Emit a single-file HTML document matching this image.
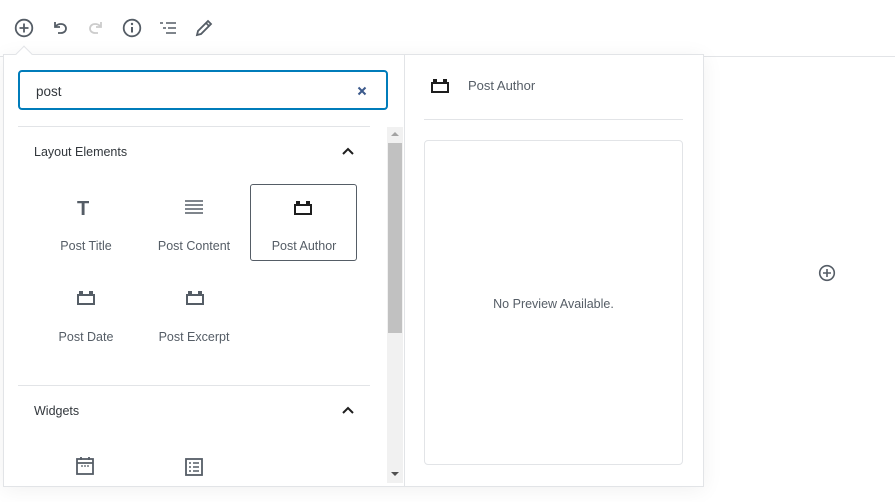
<!DOCTYPE html>
<html><head><meta charset="utf-8"><style>
*{box-sizing:border-box;margin:0;padding:0}
body{width:895px;height:502px;overflow:hidden;background:#fff;font-family:"Liberation Sans",sans-serif;color:#555d66;position:relative}
.abs{position:absolute}
.t{font-size:12.5px;color:#555d66}
svg{display:block}
</style></head><body>
<div class="abs" style="left:0;top:56px;width:895px;height:1px;background:#e2e4e7"></div>
<svg class="abs" style="left:13px;top:17px" width="22" height="22" viewBox="0 0 22 22"><circle cx="11" cy="11" r="8.3" fill="none" stroke="#555d66" stroke-width="1.8"/><path d="M11 6.5v9M6.5 11h9" stroke="#555d66" stroke-width="1.8"/></svg>
<svg class="abs" style="left:50px;top:18px" width="20" height="20" viewBox="0 0 20 20"><path d="M5 4v5h5" fill="none" stroke="#555d66" stroke-width="1.8"/><path d="M5.5 8.5C7 6.5 9 6 11 6c3 0 5 2 5 4.5S14 15 11 15H8" fill="none" stroke="#555d66" stroke-width="1.8"/></svg>
<svg class="abs" style="left:86px;top:18px;transform:scaleX(-1)" width="20" height="20" viewBox="0 0 20 20"><path d="M5 4v5h5" fill="none" stroke="#ccc" stroke-width="1.8"/><path d="M5.5 8.5C7 6.5 9 6 11 6c3 0 5 2 5 4.5S14 15 11 15H8" fill="none" stroke="#ccc" stroke-width="1.8"/></svg>
<svg class="abs" style="left:121px;top:17px" width="22" height="22" viewBox="0 0 22 22"><circle cx="11" cy="11" r="8.3" fill="none" stroke="#555d66" stroke-width="1.8"/><path d="M11 10v5.5" stroke="#555d66" stroke-width="2"/><circle cx="11" cy="7" r="1.2" fill="#555d66"/></svg>
<svg class="abs" style="left:158px;top:18px" width="20" height="20" viewBox="0 0 20 20"><path d="M2 5h3M8 5h10M5 10h3M10 10h8M8 15h10" stroke="#555d66" stroke-width="1.6"/></svg>
<svg class="abs" style="left:193px;top:17px" width="22" height="22" viewBox="0 0 22 22"><path d="M4 18l1-4L15 4l3 3L8 17z" fill="none" stroke="#555d66" stroke-width="1.8"/><path d="M13 6l3 3" stroke="#555d66" stroke-width="1.6"/></svg>
<div class="abs" style="left:3px;top:54px;width:701px;height:433px;border:1px solid #e2e4e7;background:#fff;box-shadow:0 3px 20px rgba(0,0,0,.06)"></div>
<div class="abs" style="left:18px;top:48px;width:12px;height:12px;background:#fff;border-left:1px solid #e2e4e7;border-top:1px solid #e2e4e7;transform:rotate(45deg)"></div>
<div class="abs" style="left:404px;top:55px;width:1px;height:431px;background:#e2e4e7"></div>
<div class="abs" style="left:18px;top:70px;width:370px;height:40px;border:2px solid #007cba;border-radius:4px"></div>
<div class="abs" style="left:36px;top:84px;font-size:13.5px;color:#32373c">post</div>
<svg class="abs" style="left:356px;top:85px" width="12" height="12" viewBox="0 0 12 12"><path d="M2.5 2.5l7 7M9.5 2.5l-7 7" stroke="#3c5a8c" stroke-width="2"/></svg>
<div class="abs" style="left:18px;top:126px;width:352px;height:1px;background:#e2e4e7"></div>
<div class="abs t" style="left:34px;top:145px;color:#32373c">Layout Elements</div>
<svg class="abs" style="left:341px;top:145px" width="14" height="12" viewBox="0 0 14 12"><path d="M2 9l5-5 5 5" fill="none" stroke="#1e1e1e" stroke-width="2"/></svg>
<div class="abs" style="left:77px;top:198px;font:bold 20px 'Liberation Sans';color:#555d66">T</div>
<div class="abs t" style="left:31px;top:239px;width:110px;text-align:center">Post Title</div>
<svg class="abs" style="left:184px;top:199px" width="20" height="16" viewBox="0 0 20 16"><path d="M1 2h18M1 6h18M1 10h18M1 14h18" stroke="#555d66" stroke-width="1.5"/></svg>
<div class="abs t" style="left:139px;top:239px;width:110px;text-align:center">Post Content</div>
<div class="abs" style="left:250px;top:184px;width:107px;height:77px;border:1px solid #555d66;border-radius:3px"></div>
<svg class="abs" style="left:293px;top:201px" width="20" height="14" viewBox="0 0 20 14"><path d="M2 4h16v9H2z" fill="none" stroke="#1e1e1e" stroke-width="2"/><path d="M3 0h4v4H3zM13 0h4v4h-4z" fill="#1e1e1e"/></svg>
<div class="abs t" style="left:249px;top:239px;width:110px;text-align:center">Post Author</div>
<svg class="abs" style="left:76px;top:291px" width="20" height="14" viewBox="0 0 20 14"><path d="M2 4h16v9H2z" fill="none" stroke="#555d66" stroke-width="2"/><path d="M3 0h4v4H3zM13 0h4v4h-4z" fill="#555d66"/></svg>
<div class="abs t" style="left:31px;top:330px;width:110px;text-align:center">Post Date</div>
<svg class="abs" style="left:185px;top:291px" width="20" height="14" viewBox="0 0 20 14"><path d="M2 4h16v9H2z" fill="none" stroke="#555d66" stroke-width="2"/><path d="M3 0h4v4H3zM13 0h4v4h-4z" fill="#555d66"/></svg>
<div class="abs t" style="left:139px;top:330px;width:110px;text-align:center">Post Excerpt</div>
<div class="abs" style="left:18px;top:385px;width:352px;height:1px;background:#e2e4e7"></div>
<div class="abs t" style="left:34px;top:404px;color:#32373c">Widgets</div>
<svg class="abs" style="left:341px;top:404px" width="14" height="12" viewBox="0 0 14 12"><path d="M2 9l5-5 5 5" fill="none" stroke="#1e1e1e" stroke-width="2"/></svg>
<svg class="abs" style="left:75px;top:456px" width="20" height="20" viewBox="0 0 20 20"><rect x="2" y="3" width="16" height="15" fill="none" stroke="#555d66" stroke-width="1.8"/><path d="M2 7h16M6 1v3M14 1v3" stroke="#555d66" stroke-width="1.8"/><path d="M6 10h2M9 10h2M12 10h2" stroke="#555d66" stroke-width="1.2"/></svg>
<svg class="abs" style="left:184px;top:457px" width="20" height="20" viewBox="0 0 20 20"><rect x="2" y="2" width="16" height="16" fill="none" stroke="#555d66" stroke-width="1.8"/><path d="M5 6h2M9 6h6M5 10h2M9 10h6M5 14h2M9 14h6" stroke="#555d66" stroke-width="1.5"/></svg>
<div class="abs" style="left:387px;top:127px;width:16px;height:356px;background:#f1f1f1"></div>
<div class="abs" style="left:388px;top:143px;width:14px;height:190px;background:#c1c1c1"></div>
<div class="abs" style="left:391px;top:132px;width:0;height:0;border-left:4px solid transparent;border-right:4px solid transparent;border-bottom:4px solid #a3a3a3"></div>
<div class="abs" style="left:391px;top:472px;width:0;height:0;border-left:4px solid transparent;border-right:4px solid transparent;border-top:4px solid #505050"></div>
<svg class="abs" style="left:430px;top:79px" width="20" height="14" viewBox="0 0 20 14"><path d="M2 4h16v9H2z" fill="none" stroke="#1e1e1e" stroke-width="2"/><path d="M3 0h4v4H3zM13 0h4v4h-4z" fill="#1e1e1e"/></svg>
<div class="abs" style="left:468px;top:78px;font-size:13px;color:#555d66">Post Author</div>
<div class="abs" style="left:424px;top:119px;width:259px;height:1px;background:#e2e4e7"></div>
<div class="abs" style="left:424px;top:140px;width:259px;height:325px;border:1px solid #e2e4e7;border-radius:4px"></div>
<div class="abs t" style="left:424px;top:297px;width:259px;text-align:center">No Preview Available.</div>
<svg class="abs" style="left:817px;top:263px" width="20" height="20" viewBox="0 0 20 20"><circle cx="10" cy="10" r="7.3" fill="none" stroke="#555d66" stroke-width="1.6"/><path d="M10 6v8M6 10h8" stroke="#555d66" stroke-width="1.6"/></svg>
</body></html>
